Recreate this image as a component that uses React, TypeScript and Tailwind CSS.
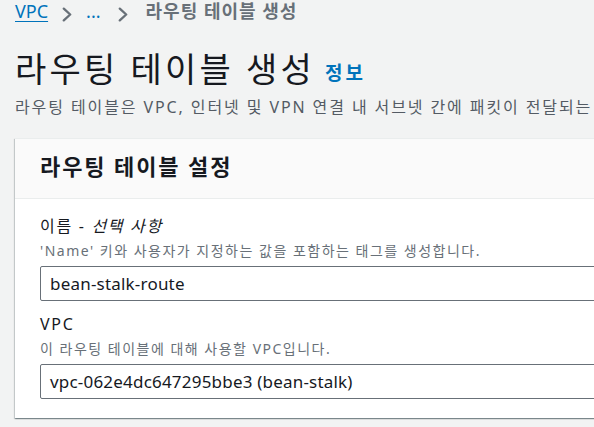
const FONT = '[font-family:"Noto_Sans","Noto_Sans_CJK_KR",sans-serif]';

function Chevron({ className }: { className?: string }) {
  return (
    <svg viewBox="0 0 10 15" className={`h-[15px] w-[10px] text-[#687078] ${className ?? ''}`} fill="none">
      <path d="M1.8 1.6 8.2 7.5 1.8 13.4" stroke="currentColor" strokeWidth="2.3" strokeLinecap="round" strokeLinejoin="round" />
    </svg>
  );
}

function Field({
  label,
  optional,
  hint,
  value,
}: {
  label: string;
  optional?: string;
  hint: string;
  value: string;
}) {
  return (
    <div className="flex flex-col">
      <label className="text-[16px] leading-[22px] tracking-[1.7px] whitespace-nowrap text-[#16191f]">
        {label}
        {optional && (
          <>
            {' - '}
            <span className="italic">{optional}</span>
          </>
        )}
      </label>
      <p className="mt-[4px] text-[14px] leading-[20px] tracking-[1.5px] whitespace-nowrap text-[#687078]">{hint}</p>
      <div className="mt-[5px] h-[35px] w-[600px] rounded-[2px] border border-[#687078] bg-white pt-[5px] pl-[9px] text-[17px] leading-[23px] tracking-[0.2px] whitespace-nowrap text-[#16191f]">
        {value}
      </div>
    </div>
  );
}

export default function App() {
  return (
    <div className={`h-[427px] w-[594px] overflow-hidden bg-[#f2f3f3] pl-[15px] ${FONT}`}>
      <nav className="flex h-[22px] items-start text-[18px] leading-[22px] whitespace-nowrap">
        <a className="text-[#0073bb] underline decoration-1 underline-offset-[3px]">VPC</a>
        <Chevron className="mt-[7px] ml-[14px]" />
        <span className="ml-[14px] text-[#0073bb]">...</span>
        <Chevron className="mt-[7px] ml-[17px]" />
        <span className="ml-[18px] font-bold tracking-[1px] text-[#687078]">라우팅 테이블 생성</span>
      </nav>

      <div className="mt-[27px] flex h-[40px] items-end whitespace-nowrap">
        <h1 className="text-[34px] leading-[40px] tracking-[3.2px] text-[#16191f]">라우팅 테이블 생성</h1>
        <a className="ml-[10px] text-[19px] leading-[31px] font-bold tracking-[3px] text-[#0073bb]">정보</a>
      </div>
      <p className="mt-[7px] text-[16px] leading-[22px] tracking-[1.9px] whitespace-nowrap text-[#545b64]">
        라우팅 테이블은 VPC, 인터넷 및 VPN 연결 내 서브넷 간에 패킷이 전달되는 방식을 지정합니다.
      </p>

      <section className="mt-[20px] w-[620px] border-t border-[#eaeded] bg-white shadow-[0_1px_1px_0_rgba(0,28,36,0.3),1px_1px_1px_0_rgba(0,28,36,0.15),-1px_1px_1px_0_rgba(0,28,36,0.15)]">
        <header className="h-[60px] border-b border-[#eaeded] bg-[#fafafa] pt-[15px] pl-[25px]">
          <h2 className="text-[22px] leading-[24px] font-bold tracking-[1.9px] whitespace-nowrap text-[#16191f]">
            라우팅 테이블 설정
          </h2>
        </header>
        <div className="flex flex-col gap-[12px] pt-[16px] pb-[19px] pl-[25px]">
          <Field
            label="이름"
            optional="선택 사항"
            hint="'Name' 키와 사용자가 지정하는 값을 포함하는 태그를 생성합니다."
            value="bean-stalk-route"
          />
          <Field label="VPC" hint="이 라우팅 테이블에 대해 사용할 VPC입니다." value="vpc-062e4dc647295bbe3 (bean-stalk)" />
        </div>
      </section>
    </div>
  );
}
